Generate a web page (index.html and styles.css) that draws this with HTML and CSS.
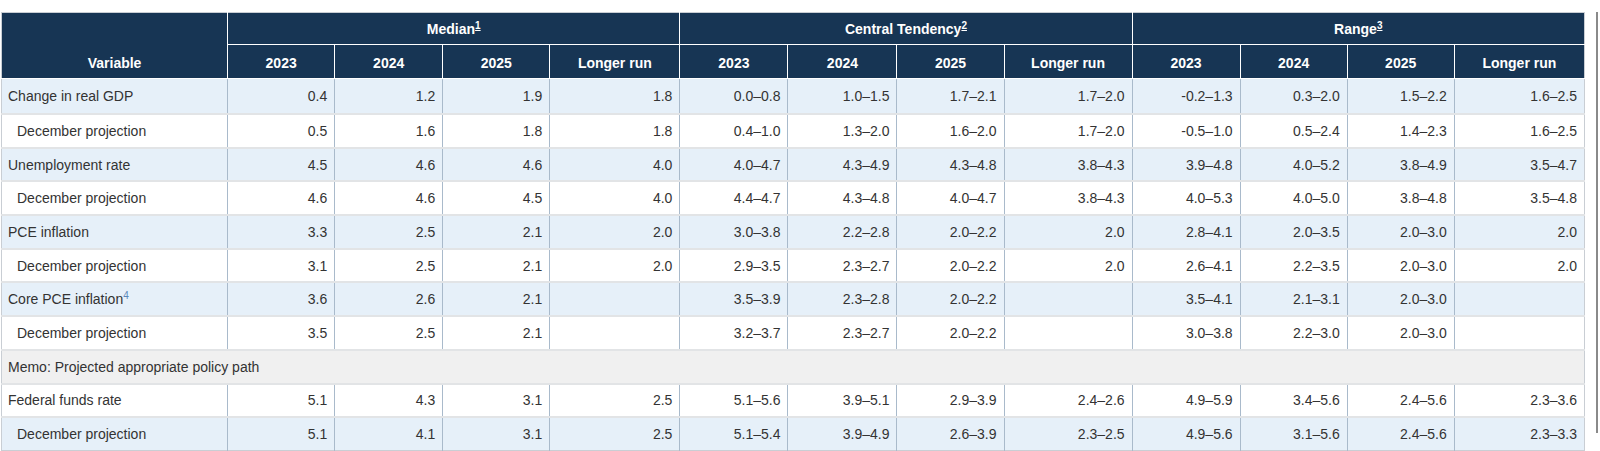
FILE: index.html
```html
<!DOCTYPE html>
<html lang="en">
<head>
<meta charset="utf-8">
<title>Economic projections</title>
<link rel="stylesheet" href="styles.css">
</head>
<body>
<div class="page">
  <div class="scroller">
    <table class="proj">
      <colgroup>
        <col class="c-var">
        <col class="c-yr"><col class="c-yr2"><col class="c-yr"><col class="c-lr">
        <col class="c-yr2"><col class="c-yr3"><col class="c-yr"><col class="c-lr2">
        <col class="c-yr2"><col class="c-yr"><col class="c-yr"><col class="c-lr">
      </colgroup>
      <thead>
        <tr class="h1">
          <th rowspan="2" class="var-h">Variable</th>
          <th colspan="4">Median<sup><a>1</a></sup></th>
          <th colspan="4">Central Tendency<sup><a>2</a></sup></th>
          <th colspan="4">Range<sup><a>3</a></sup></th>
        </tr>
        <tr class="h2">
          <th>2023</th><th>2024</th><th>2025</th><th>Longer run</th>
          <th>2023</th><th>2024</th><th>2025</th><th>Longer run</th>
          <th>2023</th><th>2024</th><th>2025</th><th>Longer run</th>
        </tr>
      </thead>
      <tbody>
        <tr class="alt">
          <td class="lbl">Change in real GDP</td>
          <td>0.4</td><td>1.2</td><td>1.9</td><td>1.8</td>
          <td>0.0–0.8</td><td>1.0–1.5</td><td>1.7–2.1</td><td>1.7–2.0</td>
          <td>-0.2–1.3</td><td>0.3–2.0</td><td>1.5–2.2</td><td>1.6–2.5</td>
        </tr>
        <tr>
          <td class="lbl sub">December projection</td>
          <td>0.5</td><td>1.6</td><td>1.8</td><td>1.8</td>
          <td>0.4–1.0</td><td>1.3–2.0</td><td>1.6–2.0</td><td>1.7–2.0</td>
          <td>-0.5–1.0</td><td>0.5–2.4</td><td>1.4–2.3</td><td>1.6–2.5</td>
        </tr>
        <tr class="alt">
          <td class="lbl">Unemployment rate</td>
          <td>4.5</td><td>4.6</td><td>4.6</td><td>4.0</td>
          <td>4.0–4.7</td><td>4.3–4.9</td><td>4.3–4.8</td><td>3.8–4.3</td>
          <td>3.9–4.8</td><td>4.0–5.2</td><td>3.8–4.9</td><td>3.5–4.7</td>
        </tr>
        <tr>
          <td class="lbl sub">December projection</td>
          <td>4.6</td><td>4.6</td><td>4.5</td><td>4.0</td>
          <td>4.4–4.7</td><td>4.3–4.8</td><td>4.0–4.7</td><td>3.8–4.3</td>
          <td>4.0–5.3</td><td>4.0–5.0</td><td>3.8–4.8</td><td>3.5–4.8</td>
        </tr>
        <tr class="alt">
          <td class="lbl">PCE inflation</td>
          <td>3.3</td><td>2.5</td><td>2.1</td><td>2.0</td>
          <td>3.0–3.8</td><td>2.2–2.8</td><td>2.0–2.2</td><td>2.0</td>
          <td>2.8–4.1</td><td>2.0–3.5</td><td>2.0–3.0</td><td>2.0</td>
        </tr>
        <tr>
          <td class="lbl sub">December projection</td>
          <td>3.1</td><td>2.5</td><td>2.1</td><td>2.0</td>
          <td>2.9–3.5</td><td>2.3–2.7</td><td>2.0–2.2</td><td>2.0</td>
          <td>2.6–4.1</td><td>2.2–3.5</td><td>2.0–3.0</td><td>2.0</td>
        </tr>
        <tr class="alt">
          <td class="lbl">Core PCE inflation<sup class="fn">4</sup></td>
          <td>3.6</td><td>2.6</td><td>2.1</td><td></td>
          <td>3.5–3.9</td><td>2.3–2.8</td><td>2.0–2.2</td><td></td>
          <td>3.5–4.1</td><td>2.1–3.1</td><td>2.0–3.0</td><td></td>
        </tr>
        <tr>
          <td class="lbl sub">December projection</td>
          <td>3.5</td><td>2.5</td><td>2.1</td><td></td>
          <td>3.2–3.7</td><td>2.3–2.7</td><td>2.0–2.2</td><td></td>
          <td>3.0–3.8</td><td>2.2–3.0</td><td>2.0–3.0</td><td></td>
        </tr>
        <tr class="memo">
          <td colspan="13" class="lbl">Memo: Projected appropriate policy path</td>
        </tr>
        <tr>
          <td class="lbl">Federal funds rate</td>
          <td>5.1</td><td>4.3</td><td>3.1</td><td>2.5</td>
          <td>5.1–5.6</td><td>3.9–5.1</td><td>2.9–3.9</td><td>2.4–2.6</td>
          <td>4.9–5.9</td><td>3.4–5.6</td><td>2.4–5.6</td><td>2.3–3.6</td>
        </tr>
        <tr class="alt">
          <td class="lbl sub">December projection</td>
          <td>5.1</td><td>4.1</td><td>3.1</td><td>2.5</td>
          <td>5.1–5.4</td><td>3.9–4.9</td><td>2.6–3.9</td><td>2.3–2.5</td>
          <td>4.9–5.6</td><td>3.1–5.6</td><td>2.4–5.6</td><td>2.3–3.3</td>
        </tr>
      </tbody>
    </table>
  </div>
  <div class="vbar"></div>
</div>
</body>
</html>
```

FILE: styles.css
```css
html, body {
  margin: 0;
  padding: 0;
  background: #ffffff;
}
body {
  font-family: "Liberation Sans", Arial, sans-serif;
  font-size: 14px;
  color: #333333;
}
.page {
  display: flex;
  align-items: flex-start;
  padding: 12px 0 0 1px;
}
.scroller {
  width: 1584px;
}
.vbar {
  width: 2px;
  height: 421px;
  margin-left: 11px;
  background: #8a8a8a;
}
.proj {
  border-collapse: collapse;
  table-layout: fixed;
  width: 1584px;
  border: 1px solid #c9ced4;
}
.c-var { width: 226px; }
.c-yr { width: 107px; }
.c-yr2 { width: 108px; }
.c-yr3 { width: 109px; }
.c-lr { width: 130px; }
.c-lr2 { width: 128px; }

.proj th {
  background: #173554;
  color: #ffffff;
  font-weight: bold;
  font-size: 14px;
  text-align: center;
  border: 1px solid #ffffff;
  padding: 0 6px;
}
.proj tr.h1 th {
  height: 31px;
  border-top-color: #c9ced4;
}
.proj tr.h2 th {
  height: 31px;
  padding-top: 2px;
}
.proj th.var-h {
  vertical-align: bottom;
  padding-bottom: 7px;
  border-left-color: #c9ced4;
}
.proj tr.h1 th:last-child,
.proj tr.h2 th:last-child {
  border-right-color: #c9ced4;
}
.proj sup {
  font-size: 10px;
  line-height: 0;
  vertical-align: 5px;
}
.proj th sup a {
  color: #ffffff;
  text-decoration: underline;
}
.proj td {
  height: 31.7px;
  padding: 0 7px 0 6px;
  text-align: right;
  border-left: 1px solid #a9bacb;
  border-right: 1px solid #a9bacb;
  border-top: 2px solid #e2e4e6;
  white-space: nowrap;
  color: #333333;
}
.proj tbody tr:first-child td {
  border-top: none;
  height: 34px;
}
.proj tr.alt td {
  background: #e6f0f9;
}
.proj tr.memo td {
  background: #f0f0f0;
}
.proj td.lbl {
  text-align: left;
  border-left-color: #c9ced4;
}
.proj td.sub {
  padding-left: 15px;
}
.proj td:last-child {
  border-right-color: #c9ced4;
}
.proj sup.fn {
  color: #5b86b8;
  margin-left: 0;
}
```
